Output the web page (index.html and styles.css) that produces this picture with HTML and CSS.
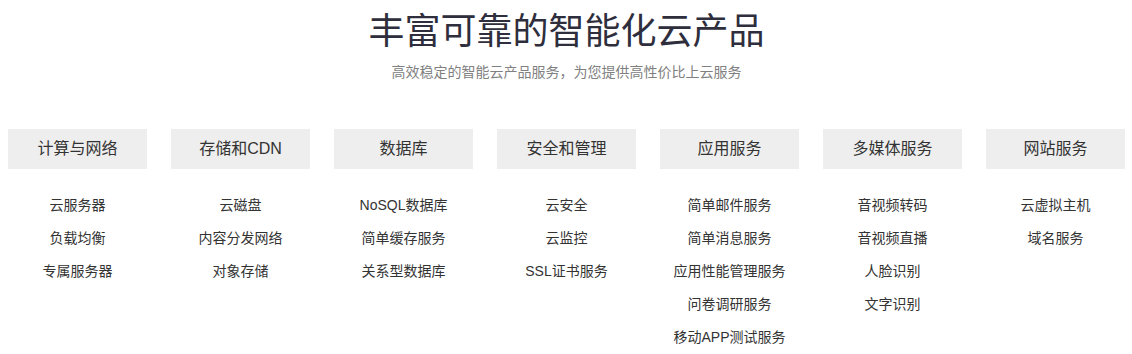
FILE: index.html
```html
<!DOCTYPE html>
<html lang="zh-CN">
<head>
<meta charset="utf-8">
<title>丰富可靠的智能化云产品</title>
<link rel="stylesheet" href="styles.css">
</head>
<body>
<section class="products">
  <header class="head">
    <h1 class="title">丰富可靠的智能化云产品</h1>
    <p class="subtitle">高效稳定的智能云产品服务，为您提供高性价比上云服务</p>
  </header>
  <div class="grid">
    <div class="col">
      <h2 class="cat">计算与网络</h2>
      <ul class="list">
        <li>云服务器</li>
        <li>负载均衡</li>
        <li>专属服务器</li>
      </ul>
    </div>
    <div class="col">
      <h2 class="cat">存储和CDN</h2>
      <ul class="list">
        <li>云磁盘</li>
        <li>内容分发网络</li>
        <li>对象存储</li>
      </ul>
    </div>
    <div class="col">
      <h2 class="cat">数据库</h2>
      <ul class="list">
        <li>NoSQL数据库</li>
        <li>简单缓存服务</li>
        <li>关系型数据库</li>
      </ul>
    </div>
    <div class="col">
      <h2 class="cat">安全和管理</h2>
      <ul class="list">
        <li>云安全</li>
        <li>云监控</li>
        <li>SSL证书服务</li>
      </ul>
    </div>
    <div class="col">
      <h2 class="cat">应用服务</h2>
      <ul class="list">
        <li>简单邮件服务</li>
        <li>简单消息服务</li>
        <li>应用性能管理服务</li>
        <li>问卷调研服务</li>
        <li>移动APP测试服务</li>
      </ul>
    </div>
    <div class="col">
      <h2 class="cat">多媒体服务</h2>
      <ul class="list">
        <li>音视频转码</li>
        <li>音视频直播</li>
        <li>人脸识别</li>
        <li>文字识别</li>
      </ul>
    </div>
    <div class="col">
      <h2 class="cat">网站服务</h2>
      <ul class="list">
        <li>云虚拟主机</li>
        <li>域名服务</li>
      </ul>
    </div>
  </div>
</section>
</body>
</html>
```
FILE: styles.css
```css
html, body {
  margin: 0;
  padding: 0;
  background: #fff;
}
body {
  font-family: "Liberation Sans", "Noto Sans CJK SC", sans-serif;
  color: #333;
}
.products {
  padding: 0 7px 0 8px;
}
.head {
  text-align: center;
}
.title {
  margin: 14px 0 0;
  font-size: 36px;
  line-height: 36px;
  font-weight: normal;
  color: #2e2e3c;
}
.subtitle {
  margin: 12px 0 0;
  font-size: 14px;
  line-height: 20px;
  color: #808080;
}
.grid {
  margin-top: 47px;
  display: grid;
  grid-template-columns: repeat(7, 139px);
  column-gap: 24px;
}
.cat {
  margin: 0;
  height: 40px;
  line-height: 40px;
  background: #eeeeee;
  text-align: center;
  font-size: 16px;
  font-weight: normal;
  color: #333;
}
.list {
  list-style: none;
  margin: 0;
  padding: 20px 0 0;
  text-align: center;
  font-size: 14px;
  line-height: 33px;
  color: #333;
}
```
